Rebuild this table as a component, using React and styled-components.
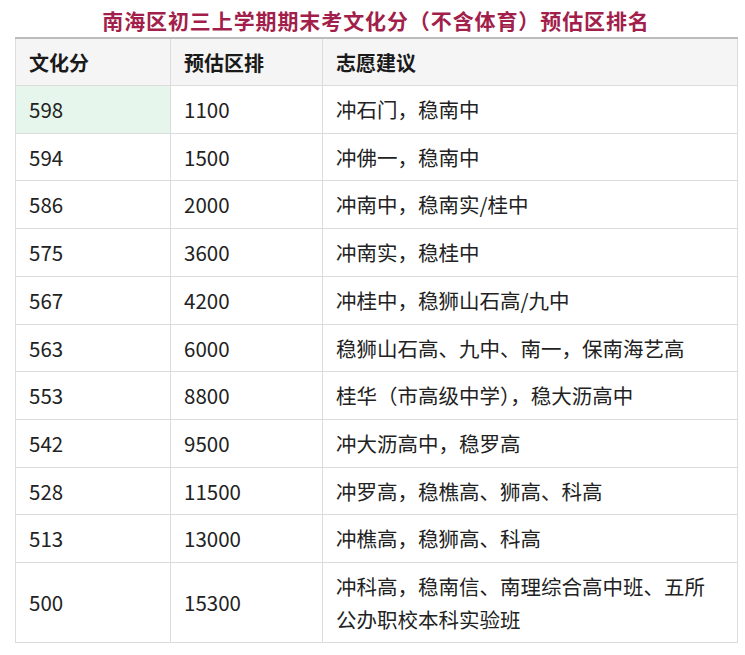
import React from 'react';
import styled, { createGlobalStyle } from 'styled-components';

const GlobalStyle = createGlobalStyle`
  body {
    margin: 0;
    background: #ffffff;
    font-family: "Noto Sans CJK SC", "Noto Sans", sans-serif;
  }
`;

const rows = [
  { score: '598', rank: '1100', advice: '冲石门，稳南中', highlight: true },
  { score: '594', rank: '1500', advice: '冲佛一，稳南中' },
  { score: '586', rank: '2000', advice: '冲南中，稳南实/桂中' },
  { score: '575', rank: '3600', advice: '冲南实，稳桂中' },
  { score: '567', rank: '4200', advice: '冲桂中，稳狮山石高/九中' },
  { score: '563', rank: '6000', advice: '稳狮山石高、九中、南一，保南海艺高' },
  { score: '553', rank: '8800', advice: '桂华（市高级中学），稳大沥高中' },
  { score: '542', rank: '9500', advice: '冲大沥高中，稳罗高' },
  { score: '528', rank: '11500', advice: '冲罗高，稳樵高、狮高、科高' },
  { score: '513', rank: '13000', advice: '冲樵高，稳狮高、科高' },
  { score: '500', rank: '15300', advice: '冲科高，稳南信、南理综合高中班、五所公办职校本科实验班' }
];

const Page = styled.div`
  width: 745px;
  padding: 6px 8px 0 15px;
  box-sizing: border-box;
`;

const Title = styled.h1`
  margin: 0;
  height: 31px;
  text-align: center;
  font-size: 21px;
  line-height: 28px;
  font-weight: 700;
  letter-spacing: 0.9px;
  color: #a21f4b;
`;

const Table = styled.table`
  width: 722px;
  border-collapse: collapse;
  table-layout: fixed;
  border-top: 2px solid #bcbcbc;
`;

const HeadCell = styled.th`
  background: #f5f5f5;
  text-align: left;
  font-size: 20px;
  font-weight: 700;
  color: #1a1a1a;
  height: 46px;
  padding: 0 13px;
  border: 1px solid #dcdcdc;
  border-top: none;
`;

const Cell = styled.td`
  background: ${p => (p.$highlight ? '#e6f6ec' : '#ffffff')};
  font-size: 20.5px;
  line-height: 32.7px;
  color: #222222;
  padding: 7px 13px;
  border: 1px solid #dcdcdc;
  vertical-align: middle;
  word-break: break-all;
`;

const App = () => (
  <Page>
    <GlobalStyle />
    <Title>南海区初三上学期期末考文化分（不含体育）预估区排名</Title>
    <Table>
      <colgroup>
        <col style={{ width: 155 }} />
        <col style={{ width: 152 }} />
        <col style={{ width: 415 }} />
      </colgroup>
      <thead>
        <tr>
          <HeadCell>文化分</HeadCell>
          <HeadCell>预估区排</HeadCell>
          <HeadCell>志愿建议</HeadCell>
        </tr>
      </thead>
      <tbody>
        {rows.map(r => (
          <tr key={r.score}>
            <Cell $highlight={r.highlight}>{r.score}</Cell>
            <Cell>{r.rank}</Cell>
            <Cell>{r.advice}</Cell>
          </tr>
        ))}
      </tbody>
    </Table>
  </Page>
);

export default App;
